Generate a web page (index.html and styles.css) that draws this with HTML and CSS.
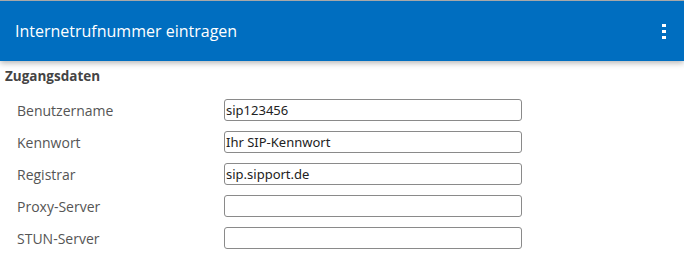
FILE: index.html
```html
<!DOCTYPE html>
<html lang="de">
<head>
    <meta charset="UTF-8">
    <meta name="viewport" content="width=device-width, initial-scale=1.0">
    <title>Internetrufnummer eintragen</title>
    <link rel="stylesheet" href="styles.css">
</head>
<body>

    <div class="topbar">
        <h1>Internetrufnummer eintragen</h1>
        <button class="menu-btn" aria-label="Menü">
            <span></span><span></span><span></span>
        </button>
    </div>

    <div class="content">
        <h2>Zugangsdaten</h2>

        <form class="form">
            <div class="row">
                <label for="user">Benutzername</label>
                <input type="text" id="user" value="sip123456">
            </div>
            <div class="row">
                <label for="pass">Kennwort</label>
                <input type="text" id="pass" value="Ihr SIP-Kennwort">
            </div>
            <div class="row">
                <label for="registrar">Registrar</label>
                <input type="text" id="registrar" value="sip.sipport.de">
            </div>
            <div class="row">
                <label for="proxy">Proxy-Server</label>
                <input type="text" id="proxy" value="">
            </div>
            <div class="row">
                <label for="stun">STUN-Server</label>
                <input type="text" id="stun" value="">
            </div>
        </form>
    </div>

</body>
</html>
```

FILE: styles.css
```css
body {
    font-family: "Open Sans", Arial, sans-serif;
    background-color: #fff;
    margin: 0;
    padding: 0;
    border-top: 1px solid #a8a8a8;
}
.topbar {
    height: 60px;
    background-color: #006ec0;
    display: flex;
    align-items: center;
    justify-content: space-between;
    padding: 0 15px;
    box-shadow: 0 2px 6px rgba(0, 0, 0, 0.3);
}
.topbar h1 {
    margin: 0;
    font-size: 16px;
    font-weight: normal;
    color: #fff;
}
.menu-btn {
    display: flex;
    flex-direction: column;
    gap: 3px;
    background: none;
    border: none;
    padding: 0;
    margin-right: 3px;
    cursor: pointer;
}
.menu-btn span {
    width: 4px;
    height: 3px;
    background-color: #fff;
}
.content {
    padding: 6px 5px;
}
h2 {
    margin: 0 0 14px 0;
    font-size: 13.5px;
    font-weight: bold;
    color: #444;
}
.form {
    display: flex;
    flex-direction: column;
    gap: 10px;
    padding-left: 12px;
}
.row {
    display: flex;
    align-items: center;
}
.row label {
    width: 207px;
    font-size: 14px;
    color: #555;
}
.row input {
    width: 298px;
    height: 22px;
    box-sizing: border-box;
    padding: 0 1px;
    border: 1px solid #8a8a8a;
    border-radius: 3px;
    font-family: "Noto Sans", Arial, sans-serif;
    font-size: 13px;
    color: #222;
}
```
